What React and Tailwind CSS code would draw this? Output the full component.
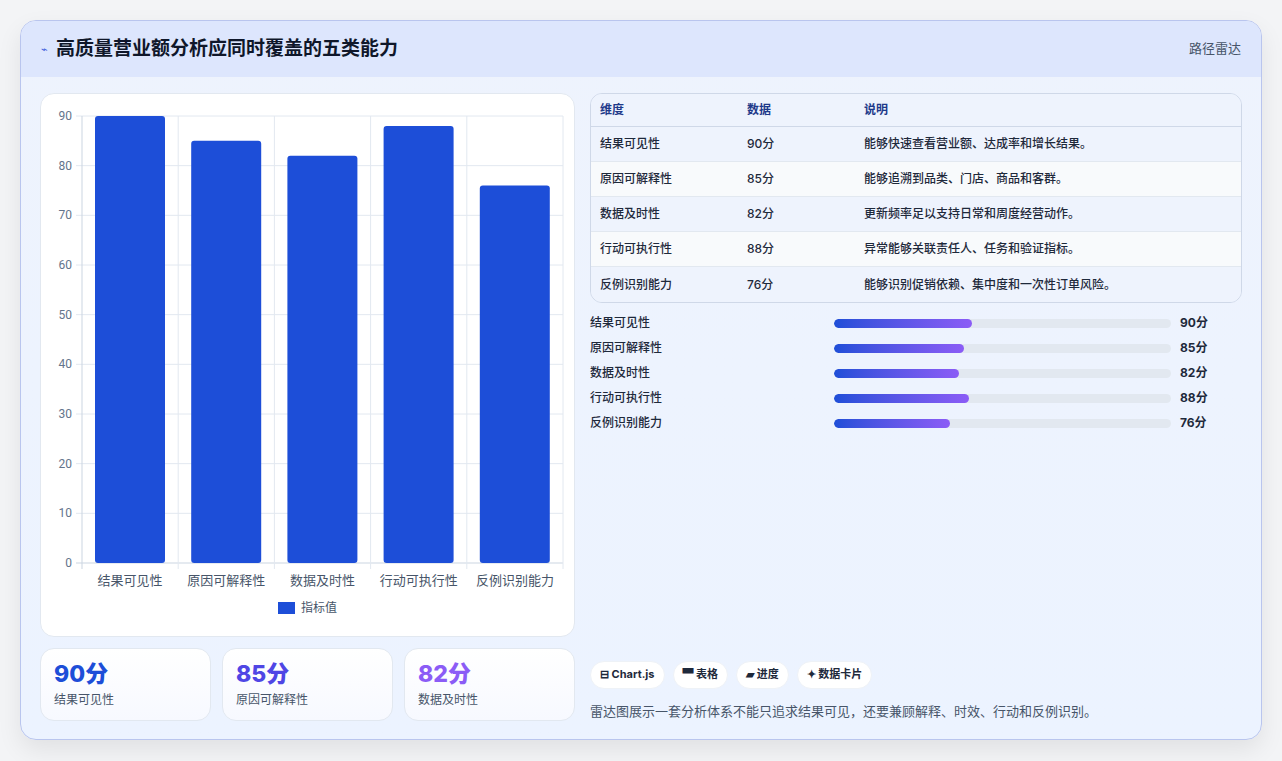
import React from "react";

const dims = [
  ["结果可见性", 90, "能够快速查看营业额、达成率和增长结果。", 138],
  ["原因可解释性", 85, "能够追溯到品类、门店、商品和客群。", 130],
  ["数据及时性", 82, "更新频率足以支持日常和周度经营动作。", 125],
  ["行动可执行性", 88, "异常能够关联责任人、任务和验证指标。", 135],
  ["反例识别能力", 76, "能够识别促销依赖、集中度和一次性订单风险。", 116],
];

function Chart() {
  const L = 41, R = 522, T = 22, B = 469;
  const cw = (R - L) / 5;
  const y = (v) => B - (v / 90) * (B - T);
  return (
    <svg width="534" height="543" className="block">
      {[0, 10, 20, 30, 40, 50, 60, 70, 80, 90].map((v) => (
        <g key={v}>
          <line x1={L - 6} x2={R} y1={y(v)} y2={y(v)} stroke={v === 0 ? "#cbd5e1" : "#e2e8f0"} />
          <text x={L - 10} y={y(v) + 4} textAnchor="end" fontSize="12" fill="#64748b" fontFamily="Roboto, sans-serif">{v}</text>
        </g>
      ))}
      {[0, 1, 2, 3, 4, 5].map((i) => (
        <line key={i} x1={L + i * cw} x2={L + i * cw} y1={T} y2={B + 6} stroke={i === 0 ? "#cbd5e1" : "#e2e8f0"} />
      ))}
      {dims.map(([n, v], i) => (
        <g key={n}>
          <rect x={L + i * cw + 13} y={y(v)} width={70} height={B - y(v)} rx="3" fill="#1d4ed8" />
          <text x={L + i * cw + cw / 2} y={B + 22} textAnchor="middle" fontSize="13" fill="#475569" fontFamily="'Noto Sans CJK SC', sans-serif">{n}</text>
        </g>
      ))}
      <rect x="237" y="508" width="17" height="12" fill="#1d4ed8" />
      <text x="260" y="518" fontSize="12" fill="#475569" fontFamily="'Noto Sans CJK SC', sans-serif">指标值</text>
    </svg>
  );
}

export default function App() {
  return (
    <div className="w-[1282px] h-[761px] bg-[#f3f4f6] p-[20px] pb-[21px]" style={{ fontFamily: "Inter, 'Noto Sans CJK SC', sans-serif" }}>
      <div className="h-[720px] rounded-[16px] border border-[#b9c5ee] overflow-hidden shadow-[0_10px_25px_rgba(0,0,0,0.08)] bg-gradient-to-b from-[#eef3fd] to-[#ecf3ff] flex flex-col">
        <div className="h-[56px] shrink-0 bg-[#dde6fd] flex items-center justify-between px-[20px]">
          <div className="flex items-center gap-[8px]">
            <span className="text-[#3b5bdb] text-[11px]">⌁</span>
            <span className="text-[19px] font-bold text-[#0f172a]">高质量营业额分析应同时覆盖的五类能力</span>
          </div>
          <span className="text-[13px] text-[#475569]">路径雷达</span>
        </div>
        <div className="flex-1 flex gap-[15px] px-[19px] pt-[16px] pb-[18px]">
          <div className="w-[535px] flex flex-col gap-[11px]">
            <div className="h-[544px] rounded-[14px] bg-white border border-[#e2e8f0]">
              <Chart />
            </div>
            <div className="flex gap-[11px]">
              {[["90分", "text-[#1d4ed8]", "结果可见性"], ["85分", "text-[#4f46e5]", "原因可解释性"], ["82分", "text-[#8b5cf6]", "数据及时性"]].map(([v, c, l]) => (
                <div key={l} className="flex-1 h-[73px] rounded-[14px] bg-gradient-to-b from-white to-[#f7f9ff] border border-[#e2e8f0] px-[13px] pt-[10px]">
                  <div className={`text-[23px] font-extrabold leading-[30px] ${c}`}>{v}</div>
                  <div className="text-[12px] text-[#475569] mt-[2px]">{l}</div>
                </div>
              ))}
            </div>
          </div>
          <div className="flex-1 flex flex-col">
            <div className="rounded-[12px] border border-[#cfd8e8] overflow-hidden text-[12px]">
              <div className="flex h-[33px] items-center bg-[#eef3fd] border-b border-[#cfd8e8] font-bold text-[#1e3a8a]">
                <div className="w-[156px] pl-[9px]">维度</div><div className="w-[117px]">数据</div><div>说明</div>
              </div>
              {dims.map(([n, v, d], i) => (
                <div key={n} className={`flex h-[35px] items-center text-[#1e293b] font-medium ${i % 2 ? "bg-[#f8fafc]" : "bg-[#eef3fd]"} ${i < 4 ? "border-b border-[#e2e8f0]" : ""}`}>
                  <div className="w-[156px] pl-[9px]">{n}</div><div className="w-[117px]">{v}分</div><div>{d}</div>
                </div>
              ))}
            </div>
            <div className="flex flex-col gap-[9px] mt-[12px] text-[12px] font-medium text-[#1e293b]">
              {dims.map(([n, v, , w]) => (
                <div key={n} className="flex items-center h-[16px]">
                  <div className="w-[244px]">{n}</div>
                  <div className="w-[337px] h-[9px] rounded-full bg-[#e2e8f0] overflow-hidden">
                    <div className="h-full rounded-full bg-gradient-to-r from-[#1d4ed8] to-[#8b5cf6]" style={{ width: w }} />
                  </div>
                  <div className="ml-[9px] font-bold">{v}分</div>
                </div>
              ))}
            </div>
            <div className="mt-auto flex gap-[8px] text-[11px] font-bold text-[#1e293b]">
              {["⊟ Chart.js", "▀ 表格", "▰ 进度", "✦ 数据卡片"].map((t) => (
                <span key={t} className="h-[28px] px-[9px] rounded-full bg-white border border-[#eef2f7] flex items-center">{t}</span>
              ))}
            </div>
            <div className="mt-[13px] text-[13px] text-[#475569]">雷达图展示一套分析体系不能只追求结果可见，还要兼顾解释、时效、行动和反例识别。</div>
          </div>
        </div>
      </div>
    </div>
  );
}
